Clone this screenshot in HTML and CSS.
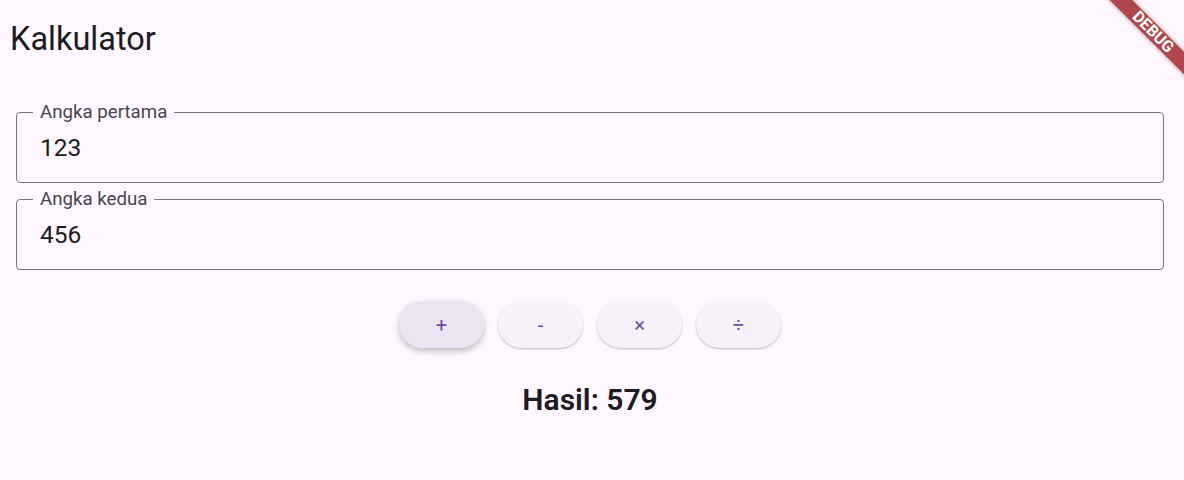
FILE: index.html
```html
<!DOCTYPE html>
<html lang="id">
<head>
    <meta charset="UTF-8">
    <meta name="viewport" content="width=device-width, initial-scale=1.0">
    <title>Kalkulator</title>
    <link rel="stylesheet" href="styles.css">
</head>
<body>
    <header class="appbar">
        <h1 class="title">Kalkulator</h1>
    </header>

    <main class="content">
        <fieldset class="field">
            <legend>Angka pertama</legend>
            <input id="first" type="text" inputmode="decimal" value="123">
        </fieldset>
        <fieldset class="field">
            <legend>Angka kedua</legend>
            <input id="second" type="text" inputmode="decimal" value="456">
        </fieldset>

        <div class="buttons">
            <button class="op active" onclick="calculate('+')">+</button>
            <button class="op" onclick="calculate('-')">-</button>
            <button class="op" onclick="calculate('*')">×</button>
            <button class="op" onclick="calculate('/')">÷</button>
        </div>

        <p class="result" id="result">Hasil: 579</p>
    </main>

    <div class="debug"><span class="ribbon">DEBUG</span></div>

    <script>
        function calculate(op){
            var a = parseFloat(document.getElementById("first").value);
            var b = parseFloat(document.getElementById("second").value);
            var r;
            if(op == "+") r = a + b;
            if(op == "-") r = a - b;
            if(op == "*") r = a * b;
            if(op == "/") r = a / b;
            document.getElementById("result").innerText = "Hasil: " + r;
        }
    </script>
</body>
</html>
```

FILE: styles.css
```css
html{
    height: 100%;
}

body{
    margin: 0;
    padding: 0;
    height: 100%;
    background-color: #fef7ff;
    color: #1d1b20;
    font-family: Roboto, "Noto Sans", sans-serif;
    overflow: hidden;
}

.appbar{
    height: 72px;
    box-sizing: border-box;
    padding: 20px 10px 0 10px;
}

.title{
    margin: 0;
    font-size: 32.5px;
    font-weight: 400;
    line-height: normal;
}

.content{
    padding: 31px 20px 0 16px;
}

.field{
    margin: 0 0 7px 0;
    padding: 0 23px 9px 23px;
    border: 1px solid #79747e;
    border-radius: 4px;
}

.field legend{
    margin-left: -7px;
    padding: 0 7px;
    font-size: 18.7px;
    line-height: 18px;
    color: #49454f;
}

.field input{
    display: block;
    width: 100%;
    height: 52px;
    padding: 0;
    border: none;
    outline: none;
    background: transparent;
    font-family: Roboto, "Noto Sans", sans-serif;
    font-size: 24.5px;
    color: #1d1b20;
}

.buttons{
    display: flex;
    justify-content: center;
    gap: 14px;
    margin-top: 31px;
}

.op{
    width: 85px;
    height: 47px;
    border: none;
    border-radius: 24px;
    background-color: #f7f2fa;
    color: #6750a4;
    font-family: Roboto, "Noto Sans", sans-serif;
    font-size: 20px;
    font-weight: 400;
    cursor: pointer;
    box-shadow: 0 1px 2px rgba(0, 0, 0, 0.25);
}

.op.active{
    background-color: #ebe5f3;
    box-shadow: 0 3px 6px rgba(0, 0, 0, 0.25);
}

.result{
    margin: 34px 0 0 0;
    text-align: center;
    font-size: 30px;
    font-weight: 600;
    line-height: normal;
}

.debug{
    position: absolute;
    top: 0;
    right: 0;
    width: 100px;
    height: 100px;
    overflow: hidden;
    pointer-events: none;
}

.ribbon{
    position: absolute;
    left: -31px;
    top: 24px;
    width: 200px;
    height: 16px;
    line-height: 16px;
    transform: rotate(45deg);
    background-color: #b0464b;
    box-shadow: 0 0 5px rgba(0, 0, 0, 0.35);
    color: #ffffff;
    font-family: Roboto, "Noto Sans", sans-serif;
    font-size: 16px;
    font-weight: 700;
    text-align: center;
}
```
